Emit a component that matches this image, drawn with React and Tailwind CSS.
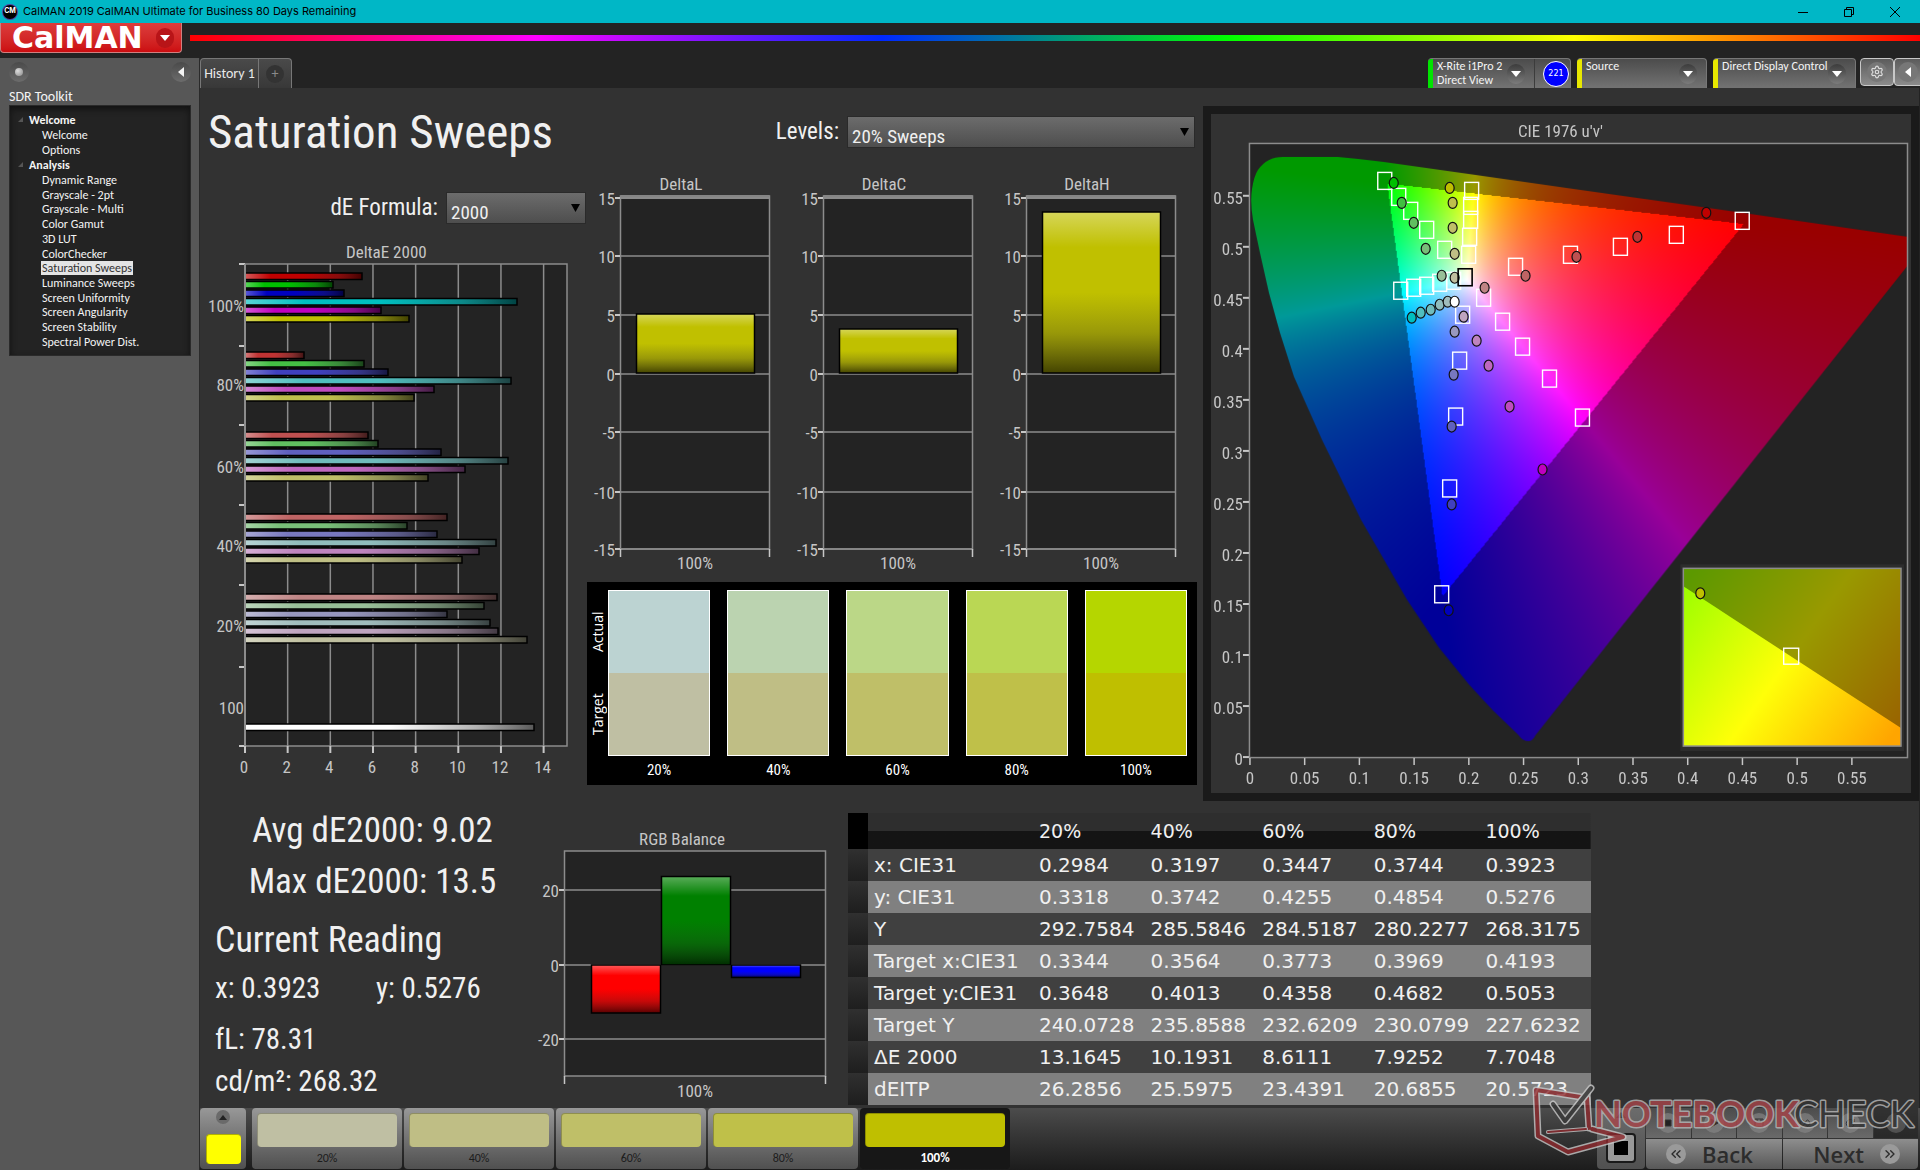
import { useEffect, useRef } from "react";
import { ChevronsLeft, ChevronsRight, Settings } from "lucide-react";

const LEVELS = ["20%", "40%", "60%", "80%", "100%"];
const TARGET_COLORS = ["#bfbfa3", "#bfbe85", "#bfbf68", "#bfc049", "#bfbf00"];
const ACTUAL_COLORS = ["#bcd3d2", "#bbd3b0", "#bbd787", "#bad754", "#b5d600"];

const MENU = [
  { title: "Welcome", items: ["Welcome", "Options"] },
  {
    title: "Analysis",
    items: [
      "Dynamic Range",
      "Grayscale - 2pt",
      "Grayscale - Multi",
      "Color Gamut",
      "3D LUT",
      "ColorChecker",
      "Saturation Sweeps",
      "Luminance Sweeps",
      "Screen Uniformity",
      "Screen Angularity",
      "Screen Stability",
      "Spectral Power Dist.",
    ],
  },
];

// [label, label y, first bar y, [[bar end x, color], ...]]
const DELTA_E = [
  ["100%", 66, 33, [[162, "#bf0000"], [133, "#00bf00"], [144, "#0000bf"], [317, "#00bfbf"], [181, "#bf00bf"], [209, "#bfbf00"]]],
  ["80%", 145, 112, [[104, "#bf3333"], [164, "#44bf44"], [188, "#4040bf"], [311, "#50bfbf"], [234, "#bf4cbf"], [214, "#bfbf4c"]]],
  ["60%", 227, 192, [[168, "#bf5050"], [178, "#60bf60"], [241, "#6060bf"], [308, "#70bcbc"], [265, "#bf68bf"], [228, "#bfbf68"]]],
  ["40%", 306, 274, [[247, "#bf6464"], [207, "#78bf78"], [237, "#7878bf"], [296, "#90bcbc"], [279, "#bf84bf"], [262, "#bfbf85"]]],
  ["20%", 386, 354, [[297, "#bf8484"], [284, "#98bf98"], [247, "#9898bf"], [290, "#a0bcbc"], [298, "#bfa4bf"], [327, "#bfbf9f"]]],
  ["100", 468, 484, [[334, "#ffffff"]]],
];

const TABLE = [
  ["x: CIE31", "0.2984", "0.3197", "0.3447", "0.3744", "0.3923"],
  ["y: CIE31", "0.3318", "0.3742", "0.4255", "0.4854", "0.5276"],
  ["Y", "292.7584", "285.5846", "284.5187", "280.2277", "268.3175"],
  ["Target x:CIE31", "0.3344", "0.3564", "0.3773", "0.3969", "0.4193"],
  ["Target y:CIE31", "0.3648", "0.4013", "0.4358", "0.4682", "0.5053"],
  ["Target Y", "240.0728", "235.8588", "232.6209", "230.0799", "227.6232"],
  ["ΔE 2000", "13.1645", "10.1931", "8.6111", "7.9252", "7.7048"],
  ["dEITP", "26.2856", "25.5975", "23.4391", "20.6855", "20.5723"],
];

const CIE_TARGETS = [
  [174, 67], [188, 83], [200, 97], [216, 116], [234, 136],
  [258, 141], [259, 123], [260, 106], [260, 92], [261, 77],
  [243, 167], [229, 169], [216, 172], [203, 174], [190, 177],
  [273, 184], [292, 208], [312, 233], [339, 265], [372, 304],
  [252, 201], [249, 247], [245, 303], [239, 375], [231, 481],
  [305, 153], [360, 141], [410, 133], [466, 121], [532, 107],
];

const CIE_READINGS = [
  [183, 69, "#00bf00"], [191, 89, "#40bf40"], [203, 109, "#60bf60"], [215, 135, "#78bf78"], [231, 162, "#98bf98"],
  [239, 74, "#bfbf00"], [242, 89, "#bfbf4c"], [242, 114, "#bfbf68"], [244, 140, "#bfbf85"], [244, 164, "#bfbf9f"],
  [496, 99, "#bf0000"], [427, 123, "#bf3333"], [366, 143, "#bf5050"], [315, 162, "#bf6464"], [274, 174, "#bf8484"],
  [201, 204, "#00bfbf"], [210, 199, "#50bfbf"], [220, 196, "#70bcbc"], [229, 191, "#90bcbc"], [237, 188, "#a0bcbc"],
  [253, 203, "#bfa4bf"], [266, 227, "#bf84bf"], [278, 252, "#bf68bf"], [299, 293, "#bf4cbf"], [332, 356, "#bf00bf"],
  [244, 218, "#9898bf"], [243, 261, "#7878bf"], [241, 313, "#6060bf"], [241, 391, "#4040bf"], [238, 497, "#0000bf"],
  [244, 188, "#ffffff"],
];

const LOCUS =
  "M318 628 Q312 628 308 622 L283 598 L258 571 L228 534 L196 486 L150 406 L111 326 L83 263 L69 219 L58 179 L49 139 L42 106 Q39 88 41 75 Q43 62 47 56 Q56 43 72 43 L127 43 Q150 45 173 48 L265 61 L356 74 L448 87 L526 98 L718 126 L325 622 Q322 628 318 628 Z";

const MARKS_5 = [0, 0.05, 0.1, 0.15, 0.2, 0.25, 0.3, 0.35, 0.4, 0.45, 0.5, 0.55];

const axisText = "fill-[#c6c6c6] text-[17px]";

// Shared shading laid over every flat bar
function Shades() {
  return (
    <defs>
      <linearGradient id="shadeX" x1="0" y1="0" x2="1" y2="0">
        <stop offset="0" stopColor="#fff" stopOpacity="0.35" />
        <stop offset="0.22" stopColor="#fff" stopOpacity="0" />
        <stop offset="0.5" stopColor="#333" stopOpacity="0" />
        <stop offset="0.8" stopColor="#222" stopOpacity="0.35" />
        <stop offset="1" stopColor="#000" stopOpacity="0.65" />
      </linearGradient>
      <linearGradient id="shadeY" x1="0" y1="0" x2="0" y2="1">
        <stop offset="0" stopColor="#fff" stopOpacity="0.35" />
        <stop offset="0.22" stopColor="#fff" stopOpacity="0" />
        <stop offset="0.5" stopColor="#333" stopOpacity="0" />
        <stop offset="0.75" stopColor="#222" stopOpacity="0.25" />
        <stop offset="1" stopColor="#000" stopOpacity="0.65" />
      </linearGradient>
    </defs>
  );
}

function Bar({ x, y, width, height, color, shade }) {
  return (
    <g>
      <rect x={x} y={y} width={width} height={height} fill={color} />
      <rect x={x} y={y} width={width} height={height} fill={`url(#${shade})`} stroke="#000" strokeWidth="1.5" />
    </g>
  );
}

function DeltaEChart() {
  return (
    <svg viewBox="0 0 386 550" className="mt-4 block w-full" role="img" aria-label="DeltaE 2000">
      <Shades />
      <text x="146" y="18" className={axisText}>DeltaE 2000</text>
      <rect x="45" y="24" width="322" height="482" fill="#232323" stroke="#8c8c8c" strokeWidth="1.5" />
      {[2, 4, 6, 8, 10, 12, 14].map((n) => (
        <line key={n} x1={45 + n * 21.33} x2={45 + n * 21.33} y1="24" y2="506" stroke="#8c8c8c" strokeWidth="1.5" />
      ))}
      {[24, 106, 185, 265, 345, 427, 506].map((y) => (
        <line key={y} x1="39" x2="45" y1={y} y2={y} stroke="#c6c6c6" strokeWidth="2" />
      ))}
      {[0, 2, 4, 6, 8, 10, 12, 14].map((n) => (
        <g key={n}>
          <line x1={45 + n * 21.33} x2={45 + n * 21.33} y1="506" y2="513" stroke="#c6c6c6" strokeWidth="2" />
          <text x={44 + n * 21.33} y="533" textAnchor="middle" className={axisText}>{n}</text>
        </g>
      ))}
      {DELTA_E.map(([label, labelY, top, bars]) => (
        <g key={label}>
          <text x="44" y={labelY + 6} textAnchor="end" className={axisText}>{label}</text>
          {bars.map(([end, color], i) => (
            <Bar key={color} x={45} y={top + i * 8.5} width={end - 45} height={6.5} color={color} shade="shadeX" />
          ))}
        </g>
      ))}
      <line x1="45" x2="45" y1="24" y2="506" stroke="#8c8c8c" strokeWidth="2" />
    </svg>
  );
}

function DeltaChart({ title, top }) {
  const rows = [[15, 28], [10, 86], [5, 145], [0, 204], [-5, 262], [-10, 322], [-15, 379]];
  return (
    <svg viewBox="0 0 203 405" className="block w-[203px]" role="img" aria-label={title}>
      <text x="95" y="20" textAnchor="middle" className={axisText}>{title}</text>
      <rect x="34.5" y="26" width="149" height="353" fill="#232323" stroke="#8c8c8c" strokeWidth="1.5" />
      <rect x="34.5" y="25" width="149" height="4" fill="#858585" />
      {rows.map(([n, y]) => (
        <g key={n}>
          <line x1="34" x2="184" y1={y} y2={y} stroke="#8c8c8c" strokeWidth="1.5" />
          <line x1="29" x2="34" y1={y} y2={y} stroke="#c6c6c6" strokeWidth="2" />
          <text x="29" y={y + 7} textAnchor="end" className={axisText}>{n}</text>
        </g>
      ))}
      <path d="M34.5 379v8M183.5 379v8" stroke="#c6c6c6" strokeWidth="1.5" />
      <Bar x={50.5} y={top} width={118} height={203 - top} color="#c0c000" shade="shadeY" />
      <text x="109" y="399" textAnchor="middle" className={axisText}>100%</text>
    </svg>
  );
}

function Swatches() {
  return (
    <div className="mt-[7px] ml-px flex h-[203px] w-[610px] bg-black pt-2 pr-[10px] text-white">
      <div className="grid h-[166px] w-[21px] grid-rows-2 font-[family-name:'Open_Sans',sans-serif] text-sm">
        {["Actual", "Target"].map((label) => (
          <span key={label} className="flex rotate-180 items-center justify-center leading-4 [writing-mode:vertical-rl]">{label}</span>
        ))}
      </div>
      <div className="grid flex-1 grid-cols-5 gap-[17px]">
        {LEVELS.map((level, i) => (
          <div key={level} className="text-center text-[15px]">
            <div className="h-[166px] border border-white">
              <div className="h-1/2" style={{ backgroundColor: ACTUAL_COLORS[i] }} />
              <div className="h-1/2" style={{ backgroundColor: TARGET_COLORS[i] }} />
            </div>
            <span className="leading-7">{level}</span>
          </div>
        ))}
      </div>
    </div>
  );
}

// Color of a u'v' chromaticity; everything outside of Rec.709 is dimmed
function chromaColor(u, v) {
  const d = 6 * u - 16 * v + 12;
  const x = (9 * u) / d;
  const y = (4 * v) / d;
  const z = 1 - x - y;
  const r = 3.2406 * x - 1.5372 * y - 0.4986 * z;
  const g = -0.9689 * x + 1.8758 * y + 0.0415 * z;
  const b = 0.0557 * x - 0.204 * y + 1.057 * z;
  const scale = (Math.min(r, g, b) < 0 ? 153 : 255) / Math.max(r, g, b);
  return [r, g, b].map((c) => Math.max(0, c) * scale);
}

function CieCanvas() {
  const ref = useRef(null);

  useEffect(() => {
    const layer = document.createElement("canvas");
    layer.width = 701;
    layer.height = 680;
    const layerCtx = layer.getContext("2d");
    const image = layerCtx.createImageData(701, 680);
    for (let py = 0; py < 680; py++) {
      for (let px = 0; px < 701; px++) {
        const i = (py * 701 + px) * 4;
        const [r, g, b] = chromaColor((px - 39) / 1096, (644 - py) / 1022);
        image.data[i] = r;
        image.data[i + 1] = g;
        image.data[i + 2] = b;
        image.data[i + 3] = 255;
      }
    }
    layerCtx.putImageData(image, 0, 0);

    const ctx = ref.current.getContext("2d");
    ctx.fillStyle = "#232323";
    ctx.fillRect(39, 30, 659, 614);
    ctx.save();
    ctx.beginPath();
    ctx.rect(39, 30, 659, 614);
    ctx.clip();
    ctx.clip(new Path2D(LOCUS));
    ctx.drawImage(layer, 0, 0);
    ctx.restore();
  }, []);

  return <canvas ref={ref} width="701" height="680" className="absolute inset-0 h-full w-full" />;
}

function CieChart() {
  return (
    <div className="relative">
      <CieCanvas />
      <svg viewBox="0 0 701 680" className="relative block w-full" role="img" aria-label="CIE 1976 u'v'">
        <defs>
          <linearGradient id="insetIn" gradientUnits="userSpaceOnUse" x1="476" y1="468" x2="686" y2="618">
            <stop offset="0" stopColor="#9cff00" />
            <stop offset="0.5" stopColor="#ffff08" />
            <stop offset="1" stopColor="#ffa500" />
          </linearGradient>
          <linearGradient id="insetOut" gradientUnits="userSpaceOnUse" x1="476" y1="468" x2="686" y2="618">
            <stop offset="0" stopColor="#5c9900" />
            <stop offset="0.5" stopColor="#999900" />
            <stop offset="1" stopColor="#996400" />
          </linearGradient>
        </defs>
        <text x="350" y="23" textAnchor="middle" className={axisText}>CIE 1976 u'v'</text>
        <rect x="38.5" y="29.5" width="659" height="615" fill="none" stroke="#8c8c8c" strokeWidth="1.5" />
        {MARKS_5.map((n) => (
          <g key={n}>
            <line x1="32" x2="38" y1={644 - n * 1022} y2={644 - n * 1022} stroke="#c6c6c6" strokeWidth="2" />
            <text x="32" y={652 - n * 1022} textAnchor="end" className={axisText}>{n}</text>
            <line x1={39 + n * 1096} x2={39 + n * 1096} y1="645" y2="652" stroke="#c6c6c6" strokeWidth="1.5" />
            <text x={39 + n * 1096} y="671" textAnchor="middle" className={axisText}>{n}</text>
          </g>
        ))}
        {CIE_TARGETS.map(([x, y]) => (
          <rect key={`${x}-${y}`} x={x - 7} y={y - 8.5} width="14" height="17" fill="none" stroke="#fff" strokeWidth="1.4" />
        ))}
        {CIE_READINGS.map(([x, y, color]) => (
          <ellipse key={`${x}-${y}`} cx={x} cy={y} rx="4.5" ry="5.5" fill={color} stroke="#111" strokeWidth="1.2" />
        ))}
        <rect x="247.5" y="155" width="14" height="17" fill="none" stroke="#000" strokeWidth="1.6" />

        <rect x="470" y="451" width="224" height="187" fill="#2d2d2d" />
        <rect x="473" y="455" width="218" height="178" fill="url(#insetIn)" />
        <path d="M473 455H691V615L473 473Z" fill="url(#insetOut)" />
        <rect x="473" y="455" width="218" height="178" fill="none" stroke="#8c8c8c" strokeWidth="1.5" />
        <rect x="573.5" y="535" width="15" height="16" fill="none" stroke="#fff" strokeWidth="1.4" />
        <ellipse cx="490" cy="480" rx="4.5" ry="5.5" fill="#bfbf00" stroke="#111" strokeWidth="1.2" />
      </svg>
    </div>
  );
}

function RgbBalance() {
  return (
    <svg viewBox="0 0 300 280" className="mt-[21px] block w-[300px] shrink-0" role="img" aria-label="RGB Balance">
      <text x="152" y="19" textAnchor="middle" className={axisText}>RGB Balance</text>
      <rect x="34.5" y="25" width="261" height="225" fill="#232323" stroke="#8c8c8c" strokeWidth="1.5" />
      {[[20, 64], [0, 139], [-20, 213]].map(([n, y]) => (
        <g key={n}>
          <line x1="34" x2="296" y1={y} y2={y} stroke="#8c8c8c" strokeWidth="1.5" />
          <line x1="29" x2="34" y1={y} y2={y} stroke="#c6c6c6" strokeWidth="2" />
          <text x="29" y={y + 7} textAnchor="end" className={axisText}>{n}</text>
        </g>
      ))}
      <path d="M34.5 250v8M295.5 250v8" stroke="#c6c6c6" strokeWidth="1.5" />
      <Bar x={61.5} y={139} width={69} height={48} color="#ff0000" shade="shadeY" />
      <Bar x={131.5} y={50.5} width={69} height={88.5} color="#008000" shade="shadeY" />
      <Bar x={201.5} y={139} width={69} height={12.5} color="#0000ff" shade="shadeY" />
      <text x="165" y="271" textAnchor="middle" className={axisText}>100%</text>
    </svg>
  );
}

function ReadingsTable() {
  return (
    <table className="mt-[8px] ml-[18px] w-[743px] shrink-0 table-fixed border-collapse self-start text-left font-[family-name:'DejaVu_Sans',sans-serif] text-[20px] leading-6 text-[#f0f0f0]">
      <colgroup>
        <col className="w-5" />
        <col className="w-[165px]" />
      </colgroup>
      <thead>
        <tr className="h-9 bg-linear-to-b from-[#2e2e2e] from-50% to-[#141414] to-50% text-[19px]">
          <td className="bg-black" />
          <td />
          {LEVELS.map((level) => (
            <th key={level} scope="col" className="p-0 pl-1.5 font-normal">{level}</th>
          ))}
        </tr>
      </thead>
      <tbody>
        {TABLE.map(([name, ...values], i) => (
          <tr key={name} className={i % 2 ? "h-8 bg-[#808080]" : "h-8 bg-[#404040]"}>
            <td className="bg-linear-to-b from-[#303030] to-[#1e1e1e]" />
            <th scope="row" className="p-0 pl-1.5 font-normal whitespace-nowrap">{name}</th>
            {values.map((value) => (
              <td key={value} className="p-0 pl-1.5">{value}</td>
            ))}
          </tr>
        ))}
      </tbody>
    </table>
  );
}

function RoundIcon({ children }) {
  return (
    <span className="flex h-5 w-[18px] shrink-0 items-center justify-center rounded-full bg-linear-to-b from-[#3c3c3c] to-[#7c7c7c] text-white">
      {children}
    </span>
  );
}

function Down() {
  return (
    <svg viewBox="0 0 10 6" className="w-[10px]" fill="currentColor">
      <path d="M0 0h10L5 6z" />
    </svg>
  );
}

function Left() {
  return (
    <svg viewBox="0 0 6 10" className="w-[6px]" fill="currentColor">
      <path d="M6 0v10L0 5z" />
    </svg>
  );
}

function Picker({ id, label, value, wide }) {
  return (
    <div className="flex h-8 items-center justify-end gap-2">
      <label htmlFor={id} className="text-[23px] text-[#f0f0f0]">{label}</label>
      <div className={wide ? "relative h-full w-[348px]" : "relative h-full w-[140px]"}>
        <select
          id={id}
          className="h-full w-full appearance-none border border-[#2a2a2a] bg-linear-to-b from-[#6c6c6c] to-[#4e4e4e] pt-2 pl-1 text-[19px] leading-6 text-[#f0f0f0]"
        >
          <option>{value}</option>
        </select>
        <svg viewBox="0 0 9 8" className="pointer-events-none absolute top-3 right-1.5 w-[9px]">
          <path d="M0 0h9L4.500 8z" />
        </svg>
      </div>
    </div>
  );
}

function DeviceTab({ lines, color, className, children }) {
  return (
    <div className={`flex h-[30px] overflow-hidden rounded-t border-t border-r border-[#777] bg-linear-to-b from-[#4c4c4c] to-[#737373] ${className}`}>
      <span className={`w-[5px] ${color}`} />
      <button className="flex flex-1 items-center justify-between pr-[9px] pl-1 text-left text-[12px] leading-[14px] whitespace-pre text-[#f4f4f4]">
        <span className="self-start">{lines}</span>
        <RoundIcon><Down /></RoundIcon>
      </button>
      {children}
    </div>
  );
}

function TitleBar() {
  return (
    <header className="flex h-[23px] items-center bg-[#00b7c6] pl-[3px] font-[family-name:Inter,sans-serif] text-[11px] text-black">
      <span className="flex size-[14px] items-center justify-center rounded-full bg-black text-[7px] font-bold text-white ring-1 ring-[#5040a0]">CM</span>
      <h1 className="ml-1.5 flex-1">CalMAN 2019 CalMAN Ultimate for Business 80 Days Remaining</h1>
      <div className="flex gap-[14px] pr-[9px]">
        <button aria-label="Minimize" className="flex w-8 justify-center">
          <svg viewBox="0 0 10 10" className="w-[10px]" stroke="#000" fill="none"><path d="M0 5.500h10" /></svg>
        </button>
        <button aria-label="Restore" className="flex w-8 justify-center">
          <svg viewBox="0 0 10 10" className="w-[10px]" stroke="#000" fill="none"><path d="M.5 2.500h7v7h-7zM2.500 2.500v-2h7v7h-2" /></svg>
        </button>
        <button aria-label="Close" className="flex w-8 justify-center">
          <svg viewBox="0 0 10 10" className="w-[10px]" stroke="#000" fill="none"><path d="M0 0l10 10M10 0L0 10" /></svg>
        </button>
      </div>
    </header>
  );
}

function Sidebar() {
  return (
    <aside className="w-[200px] shrink-0 border-r border-[#2a2a2a] bg-[#575757] pr-[8px] pl-[9px] pt-[3px] text-[#f4f4f4]">
      <div className="flex h-[22px] items-center justify-between">
        <span className="flex h-5 w-[20px] items-center justify-center rounded-full bg-linear-to-b from-[#4a4a4a] to-[#6c6c6c]">
          <span className="size-2 rounded-full bg-[radial-gradient(circle_at_35%_35%,#ddd,#888)]" />
        </span>
        <button aria-label="Collapse" className="flex h-5 w-[20px] items-center justify-center rounded-full bg-linear-to-b from-[#4a4a4a] to-[#6c6c6c]"><Left /></button>
      </div>
      <h2 className="mt-[4px] h-[18px] text-[14px] leading-5">SDR Toolkit</h2>
      <nav className="h-[251px] border border-[#2a2a2a] bg-[#232323] pt-[6px] pl-[8px] text-[12px] leading-[14px] shadow-[inset_0_3px_6px_#111]">
        {MENU.map((group) => (
          <section key={group.title}>
            <h3 className="flex h-[15px] items-center gap-1.5 font-bold">
              <svg viewBox="0 0 5 5" className="w-[5px]" fill="#555"><path d="M5 0v5H0z" /></svg>
              {group.title}
            </h3>
            <ul className={group.items.length > 2 ? "flex h-[177px] flex-col justify-between pt-px pl-[24px]" : "flex h-[30px] flex-col justify-between pt-px pl-[24px]"}>
              {group.items.map((item) => (
                <li key={item} className="h-[14px] whitespace-nowrap">
                  <a href="#" className={item === "Saturation Sweeps" ? "-ml-px block w-[92px] bg-[#e4e4e4] pl-px text-[#333]" : "block"}>{item}</a>
                </li>
              ))}
            </ul>
          </section>
        ))}
      </nav>
    </aside>
  );
}

function TransportIcon({ name }) {
  const paths = {
    stop: "M3 3h6v6H3z",
    play: "M3 2l7 4-7 4z",
    save: "M2 2h8v8H2zM4 2v3h4V2",
    loop: "M1 6c2-4 3-4 5 0s3 4 5 0c-2-4-3-4-5 0s-3 4-5 0",
    refresh: "M10 5a4 4 0 1 0 0 3M10 2v3H7",
    none: "",
  };
  const filled = name === "stop" || name === "play";
  return (
    <span className="flex h-5 w-5 items-center justify-center rounded-full bg-[#8a8a8a]/60">
      <svg viewBox="0 0 12 12" className="w-3" fill={filled ? "#222" : "none"} stroke="#333"><path d={paths[name]} /></svg>
    </span>
  );
}

function BottomBar() {
  return (
    <footer className="flex h-[62px] items-start bg-linear-to-b from-[#4c4c4c] to-[#1c1c1c] font-[family-name:Carlito,Lato,sans-serif] text-[12px]">
      <div className="flex h-[61px] w-[46px] flex-col items-center justify-between rounded bg-linear-to-b from-[#989898] to-[#505050] pt-[2px] pb-[5px]">
        <button aria-label="Show patterns" className="flex h-[14px] w-[14px] items-center justify-center rounded-full bg-[#6a6a6a]">
          <svg viewBox="0 0 8 5" className="w-2"><path d="M0 5h8L4 0z" fill="#222" /></svg>
        </button>
        <span className="h-[30px] w-[35px] rounded-sm border-t border-l border-[#b0b000] bg-[#ffff00]" />
      </div>
      <div className="ml-1.5 flex gap-0.5">
        {LEVELS.map((level, i) => (
          <button
            key={level}
            className={
              i === 4
                ? "flex h-[61px] w-[150px] flex-col rounded bg-[#171717] px-[5px] pt-[5px] text-[13px] font-bold text-white"
                : "flex h-[61px] w-[150px] flex-col rounded bg-linear-to-b from-[#989898] to-[#505050] px-[5px] pt-[5px] text-[#1c1c1c]"
            }
          >
            <span className="h-9 w-full rounded border-t border-l border-black/25" style={{ backgroundColor: TARGET_COLORS[i] }} />
            <span className="w-full leading-[22px]">{level}</span>
          </button>
        ))}
      </div>
      <div className="ml-auto flex h-[61px] gap-px pr-0.5">
        <div className="flex w-12 flex-col items-center justify-between rounded bg-linear-to-b from-[#6c6c6c] to-[#505050] pt-1 pb-1.5">
          <svg viewBox="0 0 10 6" className="w-[10px]"><path d="M0 6h10L5 0z" fill="#333" /></svg>
          <button aria-label="Pattern window" className="flex size-[30px] items-center justify-center rounded border-2 border-[#1a1a1a] bg-[#999]">
            <span className="size-[14px] bg-black" />
          </button>
        </div>
        <div className="flex w-[272px] flex-col gap-px">
          <div className="grid h-[30px] grid-cols-6 gap-px">
            {["stop", "play", "save", "loop", "refresh", "none"].map((name) => (
              <button
                key={name}
                aria-label={name}
                className={name === "none" ? "flex items-center justify-center bg-[#222] opacity-60" : "flex items-center justify-center bg-linear-to-b from-[#4c4c4c] to-[#6a6a6a]"}
              >
                <TransportIcon name={name} />
              </button>
            ))}
          </div>
          <div className="grid h-[30px] grid-cols-2 gap-px font-[family-name:'Open_Sans',sans-serif] text-[22px] leading-[30px] font-semibold text-[#2c2c2c]">
            <button className="flex items-center gap-4 rounded-bl bg-linear-to-b from-[#8e8e8e] to-[#585858] pl-5">
              <span className="flex size-5 items-center justify-center rounded-full bg-[#9a9a9a]"><ChevronsLeft size={16} /></span>
              Back
            </button>
            <button className="flex items-center justify-end gap-4 rounded-br bg-linear-to-b from-[#8e8e8e] to-[#585858] pr-[18px]">
              Next
              <span className="flex size-5 items-center justify-center rounded-full bg-[#9a9a9a]"><ChevronsRight size={16} /></span>
            </button>
          </div>
        </div>
      </div>
    </footer>
  );
}

function Watermark() {
  return (
    <svg viewBox="0 0 390 74" className="pointer-events-none absolute right-2 bottom-[10px] w-[390px] overflow-visible opacity-80" role="img" aria-label="Notebookcheck">
      <g fill="none" strokeLinejoin="round" strokeLinecap="round">
        <path d="M67 42L65 12 14 4 16 50 46 66 101 51 70 43" stroke="#c8c8c8" strokeWidth="7" />
        <path d="M67 42L65 12 14 4 16 50 46 66 101 51 70 43" stroke="#8f2a2e" strokeWidth="4" />
        <path d="M31 18L43 35 69 2" stroke="#c8c8c8" strokeWidth="7" />
        <path d="M31 18L43 35 69 2" stroke="#3a3a3a" strokeWidth="4" />
        <path d="M26 46L64 43" stroke="#c8c8c8" strokeWidth="4" />
        <path d="M26 46L64 43" stroke="#8f2a2e" strokeWidth="2" />
      </g>
      <g className="font-[family-name:Lato,sans-serif] text-[36px]" strokeWidth="3" stroke="#b8b8b8" strokeLinejoin="round" paintOrder="stroke">
        <text x="72" y="41" fill="#a8454a" className="font-bold">NOTEBOOK</text>
        <text x="272" y="41" fill="#333">CHECK</text>
      </g>
    </svg>
  );
}

export default function App() {
  return (
    <div className="relative flex min-h-screen flex-col bg-[#232323] font-[family-name:Carlito,Lato,sans-serif]">
      <TitleBar />
      <div className="flex h-[35px] items-start">
        <button className="flex h-[30px] w-[182px] items-center justify-between rounded-b border border-t-0 border-[#d08080] bg-linear-to-b from-[#dc3c3c] to-[#cc0c10] pr-[7px] pl-[11px] font-[family-name:'DejaVu_Sans',sans-serif] text-[30px] leading-7 font-bold text-white">
          CalMAN
          <span className="flex h-5 w-[18px] items-center justify-center rounded-full bg-[#b81418]"><Down /></span>
        </button>
        <div className="mt-[12px] ml-2 h-[6px] flex-1 bg-[linear-gradient(to_right,#f00,#f0f_20%,#0028ff_40%,#0f0_60%,#ff0_80%,#f00)]" />
      </div>
      <div className="flex flex-1">
        <Sidebar />
        <div className="flex min-w-0 flex-1 flex-col">
          <div className="flex h-[30px] justify-between">
            <div className="flex rounded-t border border-b-0 border-[#777] bg-linear-to-b from-[#4a4a4a] to-[#383838] text-[14px] text-[#e8e8e8]">
              <button className="w-[58px] border-r border-[#777]">History 1</button>
              <button aria-label="Add tab" className="flex w-8 items-center justify-center text-[#8a8a8a]">
                <span className="flex size-[18px] items-center justify-center rounded-full bg-[#333]">+</span>
              </button>
            </div>
            <div className="flex">
              <DeviceTab lines={"X-Rite i1Pro 2\nDirect View"} color="bg-[#00e400]" className="w-[143px]">
                <span className="flex w-[36px] items-center justify-end border-l border-[#3c3c3c] pr-px">
                  <span className="flex size-[26px] items-center justify-center rounded-full border border-white bg-[#0000ff] font-[family-name:'DejaVu_Sans',sans-serif] text-[8px] text-white">221</span>
                </span>
              </DeviceTab>
              <DeviceTab lines="Source" color="bg-[#e8e800]" className="ml-[6px] w-[130px]" />
              <DeviceTab lines="Direct Display Control" color="bg-[#e8e800]" className="ml-[6px] w-[143px]" />
              <button aria-label="Settings" className="ml-[4px] flex h-7 w-[34px] items-center justify-center rounded border border-[#c8c8c8] bg-linear-to-b from-[#5c5c5c] to-[#8c8c8c] text-[#ddd]">
                <span className="flex size-5 items-center justify-center rounded-full bg-[#777]"><Settings size={14} /></span>
              </button>
              <button aria-label="Expand" className="flex h-7 w-[26px] items-center justify-center rounded-l border border-r-0 border-[#c8c8c8] bg-linear-to-b from-[#5c5c5c] to-[#8c8c8c] text-white">
                <span className="flex size-5 items-center justify-center rounded-full bg-[#777]"><Left /></span>
              </button>
            </div>
          </div>
          <main className="flex-1 border-r border-[#232323] bg-[#323232] font-[family-name:'Roboto_Condensed','Liberation_Sans',sans-serif] text-[#f0f0f0]">
            <div className="flex">
              <section className="w-[386px] shrink-0 pt-4">
                <h2 className="pl-2 text-[47px] leading-[56px]">Saturation Sweeps</h2>
                <div className="mt-8">
                  <Picker id="formula" label="dE Formula:" value="2000" />
                </div>
                <DeltaEChart />
              </section>
              <section className="w-[617px] shrink-0 pt-7">
                <div className="pr-2">
                  <Picker id="levels" label="Levels:" value="20% Sweeps" wide />
                </div>
                <div className="mt-[22px] flex">
                  <DeltaChart title="DeltaL" top={144} />
                  <DeltaChart title="DeltaC" top={159} />
                  <DeltaChart title="DeltaH" top={42} />
                </div>
                <Swatches />
              </section>
              <section className="mt-[18px] min-w-0 flex-1 border-8 border-[#1a1a1a]">
                <CieChart />
              </section>
            </div>
            <div className="flex pt-1">
              <section className="w-[330px] shrink-0 pl-[15px]">
                <p className="text-center text-[35px] leading-[51px]">Avg dE2000: 9.02</p>
                <p className="text-center text-[35px] leading-[51px]">Max dE2000: 13.5</p>
                <h3 className="mt-2 text-[36px] leading-[51px]">Current Reading</h3>
                <p className="flex text-[29px] leading-[44px]">
                  <span className="w-[161px]">x: 0.3923</span>
                  <span>y: 0.5276</span>
                </p>
                <p className="mt-2 text-[29px] leading-[42px]">fL: 78.31</p>
                <p className="text-[29px] leading-[42px]">cd/m²: 268.32</p>
              </section>
              <RgbBalance />
              <ReadingsTable />
            </div>
          </main>
          <BottomBar />
        </div>
      </div>
      <Watermark />
    </div>
  );
}
